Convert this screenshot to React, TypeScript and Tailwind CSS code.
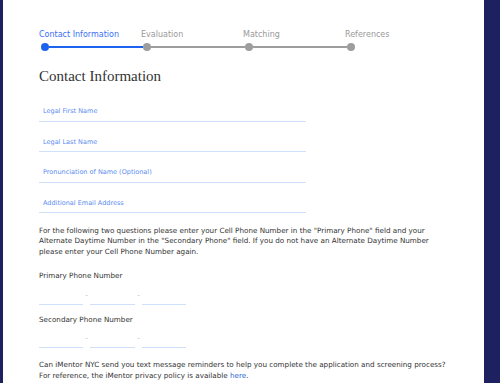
const steps = [
  { label: "Contact Information", active: true },
  { label: "Evaluation", active: false },
  { label: "Matching", active: false },
  { label: "References", active: false },
];

const fields = [
  "Legal First Name",
  "Legal Last Name",
  "Pronunciation of Name (Optional)",
  "Additional Email Address",
];

function PhoneRow({ top }: { top: string }) {
  return (
    <div className={`${top} flex items-end`}>
      <div className="h-[14px] w-[44px] border-b border-[#cfe0fb]" />
      <span className="w-[7px] pb-[7px] text-center text-[6px] leading-none text-[#999]">-</span>
      <div className="h-[14px] w-[45px] border-b border-[#cfe0fb]" />
      <span className="w-[7px] pb-[7px] text-center text-[6px] leading-none text-[#999]">-</span>
      <div className="h-[14px] w-[44px] border-b border-[#cfe0fb]" />
    </div>
  );
}

export default function App() {
  return (
    <div
      className="flex h-[383px] w-[500px] overflow-hidden bg-[#1e2160]"
      style={{ fontFamily: '"DejaVu Sans", Verdana, sans-serif' }}
    >
      <div className="ml-[3px] w-[481px] bg-white pl-[36px] pt-[30px]">
        {/* stepper */}
        <div className="flex">
          {steps.map((s, i) => (
            <div key={s.label} className="flex w-[102px] flex-col">
              <span
                className={`text-[8px] leading-[10px] ${
                  s.active ? "text-[#3b6ef5]" : "text-[#999]"
                }`}
              >
                {s.label}
              </span>
              <div className="mt-[3px] flex h-[8px] items-center pl-[2px]">
                <div
                  className={`h-[8px] w-[8px] shrink-0 rounded-full ${
                    s.active ? "bg-[#1e62f0]" : "bg-[#9d9d9d]"
                  }`}
                />
                {i < steps.length - 1 && (
                  <div
                    className={`-mr-[2px] h-[2px] flex-1 ${s.active ? "bg-[#1e62f0]" : "bg-[#9d9d9d]"}`}
                  />
                )}
              </div>
            </div>
          ))}
        </div>

        <h1
          className="mt-[15px] text-[15px] leading-[20px] text-[#333]"
          style={{ fontFamily: '"Liberation Serif", Georgia, serif' }}
        >
          Contact Information
        </h1>

        <div className="mt-[21px] flex w-[267px] flex-col gap-[16px]">
          {fields.map((f) => (
            <div
              key={f}
              className="border-b border-[#cfe0fb] pb-[4.5px] pl-[4px] text-[6.5px] leading-[9px] text-[#5b8cf0]"
            >
              {f}
            </div>
          ))}
        </div>

        <p className="mt-[12.5px] w-[400px] text-[7.2px] leading-[10.5px] text-[#333]">
          For the following two questions please enter your Cell Phone Number in the "Primary
          Phone" field and your Alternate Daytime Number in the "Secondary Phone" field. If you do
          not have an Alternate Daytime Number please enter your Cell Phone Number again.
        </p>

        <p className="mt-[14px] text-[7.2px] leading-[10px] text-[#333]">Primary Phone Number</p>
        <PhoneRow top="mt-[10px]" />

        <p className="mt-[10px] text-[7.2px] leading-[10px] text-[#333]">Secondary Phone Number</p>
        <PhoneRow top="mt-[9px]" />

        <p className="mt-[11px] w-[420px] text-[7.2px] leading-[11px] text-[#333]">
          Can iMentor NYC send you text message reminders to help you complete the application and
          screening process? For reference, the iMentor privacy policy is available{" "}
          <span className="text-[#2a6ad8]">here</span>.
        </p>
      </div>
    </div>
  );
}
